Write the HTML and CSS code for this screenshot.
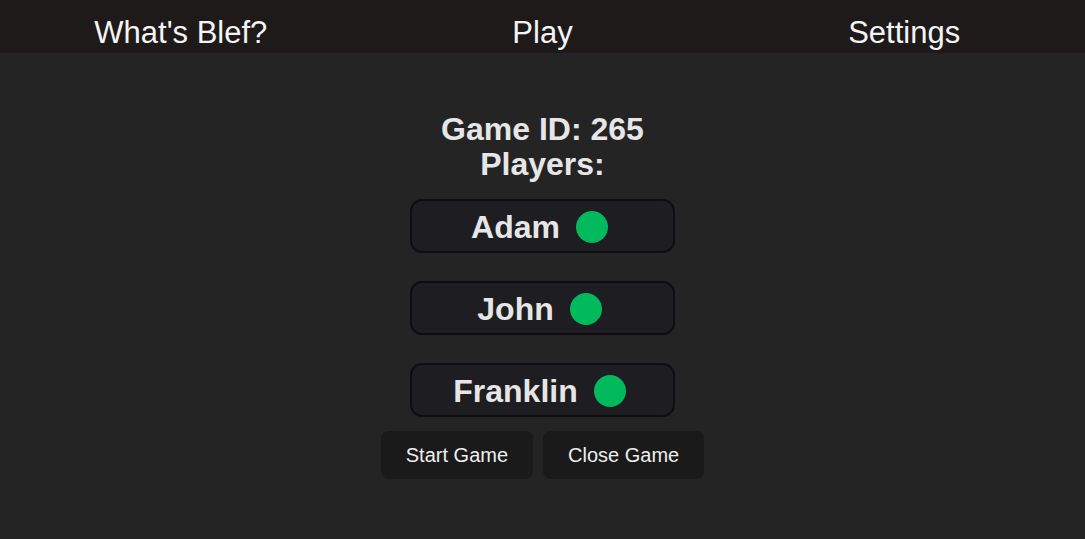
FILE: index.html
```html
<!DOCTYPE html>
<html lang="en">
<head>
<meta charset="utf-8">
<title>Blef</title>
<link rel="stylesheet" href="styles.css">
</head>
<body>
<nav class="nav">
  <a class="nav-item">What's Blef?</a>
  <a class="nav-item">Play</a>
  <a class="nav-item">Settings</a>
</nav>
<main class="main">
  <h1 class="title">Game ID: 265<br>Players:</h1>
  <ul class="players">
    <li class="player"><span class="name">Adam</span><span class="dot"></span></li>
    <li class="player"><span class="name">John</span><span class="dot"></span></li>
    <li class="player"><span class="name">Franklin</span><span class="dot"></span></li>
  </ul>
  <div class="actions">
    <button class="btn">Start Game</button>
    <button class="btn">Close Game</button>
  </div>
</main>
</body>
</html>
```
FILE: styles.css
```css
* { box-sizing: border-box; }
html, body {
  margin: 0;
  padding: 0;
  background: #242424;
  color: rgba(255, 255, 255, 0.87);
  font-family: "Liberation Sans", Arial, sans-serif;
}
.nav {
  display: grid;
  grid-template-columns: 1fr 1fr 1fr;
  height: 53px;
  background: #1e1a1a;
  align-items: center;
}
.nav-item {
  text-align: center;
  font-size: 31px;
  color: #f4f4f4;
  padding-top: 12px;
}
.main {
  display: flex;
  flex-direction: column;
  align-items: center;
}
.title {
  margin: 59px 0 0;
  font-size: 32px;
  line-height: 1.1;
  font-weight: 700;
  text-align: center;
  color: #e6e6e6;
}
.players {
  list-style: none;
  margin: 17px 0 0;
  padding: 0;
  display: flex;
  flex-direction: column;
  gap: 28px;
}
.player {
  width: 265px;
  height: 54px;
  display: flex;
  align-items: center;
  justify-content: center;
  gap: 16px;
  padding: 2px 6px 0 0;
  background: #1e1e22;
  border: 2px solid #0e0d14;
  border-radius: 12px;
}
.name {
  font-size: 32px;
  font-weight: 700;
  color: #e6e6e6;
}
.dot {
  width: 32px;
  height: 32px;
  border-radius: 50%;
  background: #02b95d;
}
.actions {
  display: flex;
  gap: 10px;
  margin-top: 14px;
}
.btn {
  font-family: inherit;
  font-size: 20px;
  padding: 12px 24px;
  height: 48px;
  border: 1px solid transparent;
  border-radius: 8px;
  background: #1a1a1a;
  color: #eeeeee;
}
```
